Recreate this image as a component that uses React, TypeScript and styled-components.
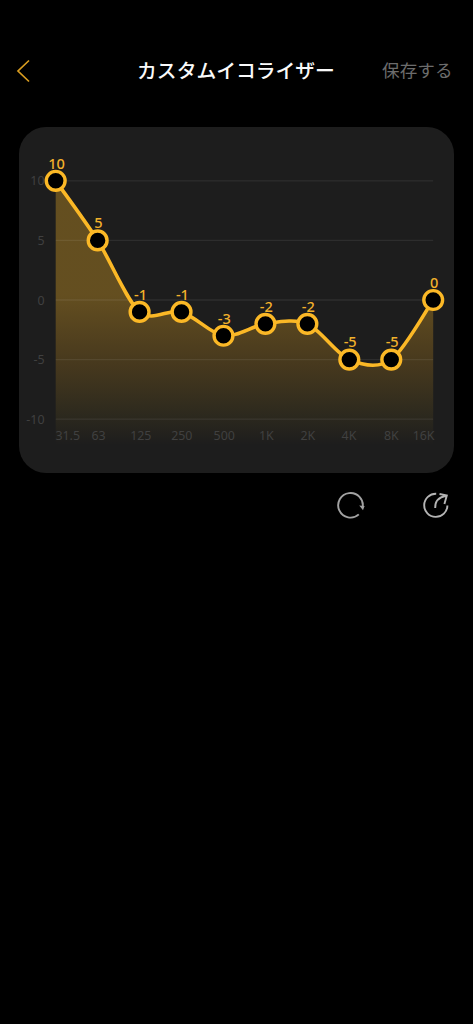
import React from "react";
import styled, { createGlobalStyle } from "styled-components";

const GlobalStyle = createGlobalStyle`
  body {
    margin: 0;
    background: #000;
  }
`;

const Screen = styled.main`
  box-sizing: border-box;
  min-height: 1024px;
  padding: 46px 19px 0;
  background: #000;
  font-family: "Noto Sans", "Noto Sans CJK JP", sans-serif;
`;

const Header = styled.header`
  display: grid;
  grid-template-columns: 1fr auto 1fr;
  align-items: center;
  height: 50px;
`;

const BackButton = styled.button`
  display: flex;
  justify-self: start;
  margin-left: -3px;
  padding: 0;
  border: 0;
  background: none;
`;

const Title = styled.h1`
  margin: 0 1px 2px 0;
  color: #fafafa;
  font-family: "Noto Sans CJK JP", sans-serif;
  font-size: 19.8px;
  font-weight: 500;
  line-height: 28px;
`;

const SaveButton = styled.button`
  justify-self: end;
  margin: 0 1.5px 2px 0;
  padding: 0;
  border: 0;
  background: none;
  color: #6c6c6c;
  font-family: "Noto Sans CJK JP", sans-serif;
  font-size: 17.6px;
  line-height: 26px;
`;

const ChartCard = styled.section`
  width: 434.5px;
  height: 346px;
  margin-top: 31px;
  border-radius: 27px;
  background: #1d1d1d;
  overflow: hidden;
`;

const Chart = styled.svg`
  display: block;
`;

const AxisLabel = styled.text`
  fill: #404040;
  font-size: 12.4px;
`;

const ValueLabel = styled.text`
  fill: #f2b12b;
  font-size: 14.6px;
  font-weight: 500;
  text-anchor: middle;
`;

const Actions = styled.div`
  display: flex;
  justify-content: flex-end;
  gap: 55px;
  margin-top: 17px;
  padding-right: 3px;
`;

const ActionButton = styled.button`
  display: flex;
  padding: 0;
  border: 0;
  background: none;
`;

const bands = [
  { name: "31.5", gain: 10, labelX: 48.7 },
  { name: "63", gain: 5, labelX: 79.6 },
  { name: "125", gain: -1, labelX: 121.8 },
  { name: "250", gain: -1, labelX: 162.8 },
  { name: "500", gain: -3, labelX: 205.2 },
  { name: "1K", gain: -2, labelX: 247.4 },
  { name: "2K", gain: -2, labelX: 288.8 },
  { name: "4K", gain: -5, labelX: 330 },
  { name: "8K", gain: -5, labelX: 372.4 },
  { name: "16K", gain: 0, labelX: 404.6 },
];

const LEFT = 36.7;
const RIGHT = 414.2;
const BASE = 318;
const toY = (gain: number) => 173 - gain * 11.92;
const points = bands.map((band, i) => ({
  x: LEFT + (i * (RIGHT - LEFT)) / (bands.length - 1),
  y: toY(band.gain),
}));

const TENSION = 0.15;
const line = points.reduce((path, p, i) => {
  if (i === 0) return `M${p.x} ${p.y}`;
  const from = points[i - 1];
  const before = points[Math.max(i - 2, 0)];
  const after = points[Math.min(i + 1, points.length - 1)];
  const c1 = [from.x + (p.x - before.x) * TENSION, from.y + (p.y - before.y) * TENSION];
  const c2 = [p.x - (after.x - from.x) * TENSION, p.y - (after.y - from.y) * TENSION];
  return `${path} C${c1.join(" ")} ${c2.join(" ")} ${p.x} ${p.y}`;
}, "");

function EqualizerChart() {
  return (
    <Chart width="434.5" height="346" viewBox="0 0 434.5 346">
      <defs>
        <linearGradient id="fade" gradientUnits="userSpaceOnUse" x1="0" y1="168" x2="0" y2={BASE}>
          <stop offset="0" stopColor="#fbb826" stopOpacity="0.32" />
          <stop offset="0.5" stopColor="#fbb020" stopOpacity="0.175" />
          <stop offset="0.83" stopColor="#fbc826" stopOpacity="0.06" />
          <stop offset="1" stopColor="#fbb826" stopOpacity="0" />
        </linearGradient>
      </defs>
      <path d={`${line} L${RIGHT} ${BASE} L${LEFT} ${BASE} Z`} fill="url(#fade)" />
      {[10, 5, 0, -5, -10].map((gain) => (
        <g key={gain}>
          <path d={`M${LEFT} ${toY(gain)}H${RIGHT}`} stroke="#fff" strokeOpacity="0.075" strokeWidth="1.3" />
          <AxisLabel x="25.5" y={toY(gain) + 4.6} textAnchor="end">
            {gain}
          </AxisLabel>
        </g>
      ))}
      {bands.map((band) => (
        <AxisLabel key={band.name} x={band.labelX} y="313.4" textAnchor="middle">
          {band.name}
        </AxisLabel>
      ))}
      <path d={line} fill="none" stroke="#fbb826" strokeWidth="3.6" />
      {points.map((p, i) => (
        <g key={bands[i].name}>
          <circle cx={p.x} cy={p.y} r="9.4" fill="#000" stroke="#fbb826" strokeWidth="3.4" />
          <ValueLabel x={p.x + 0.9} y={p.y - 12.2}>
            {bands[i].gain}
          </ValueLabel>
        </g>
      ))}
    </Chart>
  );
}

export default function App() {
  return (
    <Screen>
      <GlobalStyle />
      <Header>
        <BackButton aria-label="戻る">
          <svg width="16" height="26" viewBox="0 0 16 26" fill="none" stroke="#d99d20" strokeWidth="1.7">
            <path d="M13 2.5 2 13 13 23.5" />
          </svg>
        </BackButton>
        <Title>カスタムイコライザー</Title>
        <SaveButton>保存する</SaveButton>
      </Header>
      <ChartCard>
        <EqualizerChart />
      </ChartCard>
      <Actions>
        <ActionButton aria-label="リセット">
          <svg width="30" height="30" viewBox="0 0 30 30" fill="none">
            <path d="M22.8 24.4A12.3 12.3 0 1 1 26.6 17.6" stroke="#a2a2a2" strokeWidth="1.9" />
            <path d="M23.2 15.4 28.6 16 27 20.2Z" fill="#a2a2a2" />
          </svg>
        </ActionButton>
        <ActionButton aria-label="共有">
          <svg width="30" height="30" viewBox="0 0 30 30" fill="none" stroke="#b4b4b4" strokeWidth="1.9">
            <path d="M15.2 3.7A11.6 11.6 0 1 0 26.4 15.4" />
            <path d="M14.2 18C14 12 17.5 7.2 25 5.8M18.5 4 25.8 5.4 23.4 14" />
          </svg>
        </ActionButton>
      </Actions>
    </Screen>
  );
}
